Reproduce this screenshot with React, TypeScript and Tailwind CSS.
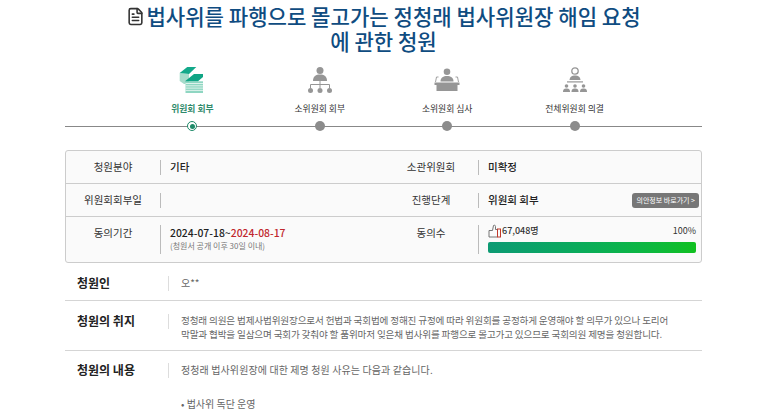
import React from 'react';
import { FileText } from 'lucide-react';

const PapersIcon = () => (
  <svg width="26" height="28" viewBox="0 0 26 28">
    <path d="M0.700 7 L10 8 V18 H5 L0.700 15Z" fill="#a6dccb" />
    <path d="M0.700 7 L8.300 1 H17.300 L10 8Z" fill="#13a98a" />
    <path d="M6.500 15.300 H24 V27 H6.500Z" fill="#8fd6c2" />
    <path d="M6 15.300 L15 8 H24 V11 L19 15.300Z" fill="#10a585" />
    <path d="M6.500 17.500H24M6.500 19.800H24M6.500 22.100H24M6.500 24.400H24" stroke="#e6f6f1" strokeWidth="0.9" />
  </svg>
);

const OrgIcon = () => (
  <svg width="26" height="28" viewBox="0 0 26 28" fill="#969696">
    <circle cx="13" cy="4.500" r="3.500" />
    <path d="M6 15 C6 10 9 8.500 13 8.500 C17 8.500 20 10 20 15Z" />
    <path d="M3.500 22V18.500H22.500V22M13 15V22" fill="none" stroke="#969696" strokeWidth="1" />
    <circle cx="3.500" cy="24.500" r="2.500" />
    <circle cx="13" cy="24.500" r="2.500" />
    <circle cx="22.500" cy="24.500" r="2.500" />
  </svg>
);

const PodiumIcon = () => (
  <svg width="26" height="24" viewBox="0 0 26 24" fill="#969696">
    <circle cx="13" cy="3.800" r="3.300" />
    <path d="M6.500 13.500 C6.500 9.500 9.500 8 13 8 C16.500 8 19.500 9.500 19.500 13.500Z" />
    <path d="M1.500 14 L2.500 9 H4.500 M24.500 14 L23.500 9 H21.500" fill="none" stroke="#969696" strokeWidth="0.9" />
    <path d="M0.500 14.500H25.500V17H23.500V23H2.500V17H0.500Z" />
  </svg>
);

const AssemblyIcon = () => (
  <svg width="26" height="26" viewBox="0 0 26 26" fill="#969696">
    <circle cx="13" cy="4" r="3.200" fill="none" stroke="#969696" strokeWidth="1.300" />
    <path d="M7.500 13 C8 9.500 10 8.500 13 8.500 C16 8.500 18 9.500 18.500 13Z" />
    <path d="M5 14.300H21V15.500H5Z" />
    <circle cx="4.500" cy="19" r="1.800" />
    <path d="M1 25 C1 22 2.500 21.500 4.500 21.500 C6.500 21.500 8 22 8 25Z" />
    <circle cx="13" cy="19" r="1.800" />
    <path d="M9.500 25 C9.500 22 11 21.500 13 21.500 C15 21.500 16.500 22 16.500 25Z" />
    <circle cx="21.500" cy="19" r="1.800" />
    <path d="M18 25 C18 22 19.500 21.500 21.500 21.500 C23.500 21.500 25 22 25 25Z" />
  </svg>
);

const ThumbIcon = () => (
  <svg width="13" height="14" viewBox="0 0 13 14" fill="none" className="mr-[1px]">
    <path d="M1 6.500H4.500L5.500 1.500C6.500 0.800 7.500 1.300 7.500 2.500V5.500H9.500V13H1Z" stroke="#666" strokeWidth="0.9" />
    <rect x="9.500" y="5" width="3" height="8" stroke="#c0392b" strokeWidth="1" />
  </svg>
);

const steps = [
  { label: '위원회 회부', icon: <PapersIcon />, active: true },
  { label: '소위원회 회부', icon: <OrgIcon /> },
  { label: '소위원회 심사', icon: <PodiumIcon /> },
  { label: '전체위원회 의결', icon: <AssemblyIcon /> },
];

const Divider = () => <span className="w-px h-[15px] bg-[#bbbbbb] shrink-0" />;

const Label = ({ children }: { children: React.ReactNode }) => (
  <div className="w-[95px] shrink-0 flex items-center">
    <span className="flex-1 text-center text-[10.5px] text-[#333]">{children}</span>
    <Divider />
  </div>
);

const DetailRow = ({ label, children }: { label: string; children: React.ReactNode }) => (
  <div className="flex px-3">
    <div className="w-[91px] shrink-0 text-[12px] font-bold leading-[18px] text-[#222]">{label}</div>
    <span className="mt-[2px] h-[15px] w-px shrink-0 bg-[#dddddd]" />
    <div className="pl-3 pt-[2px] text-[10px] leading-[13.5px] text-[#666] whitespace-nowrap">{children}</div>
  </div>
);

export default function App() {
  return (
    <div
      className="h-[414px] w-[760px] overflow-hidden bg-white"
      style={{ fontFamily: '"Noto Sans CJK KR", "Noto Sans", sans-serif' }}
    >
      <div className="ml-[65px] w-[637px]">
        <h1 className="flex flex-col items-center pt-[4px] text-[21.1px] font-medium leading-[25px] text-[#0f4c81]">
          <span className="flex items-center whitespace-nowrap">
            <FileText size={19} strokeWidth={2} className="mr-[1px] text-[#333]" />
            법사위를 파행으로 몰고가는 정청래 법사위원장 해임 요청
          </span>
          <span>에 관한 청원</span>
        </h1>

        <div className="relative mt-[12px] h-[70px]">
          <div className="absolute left-0 right-0 top-[60px] border-t border-[#888]" />
          <div className="flex justify-center">
            {steps.map((s) => (
              <div key={s.label} className="flex h-[70px] w-[127.4px] flex-col items-center">
                <div className="flex h-[28px] items-center">{s.icon}</div>
                <div
                  className={`mt-[9px] text-[8.8px] leading-[12px] ${s.active ? 'font-bold text-[#2f8a6b]' : 'text-[#333]'}`}
                >
                  {s.label}
                </div>
                {s.active ? (
                  <div className="relative mt-[6px] flex h-[10px] w-[10px] items-center justify-center rounded-full border border-[#1d8a68] bg-white">
                    <div className="h-[5px] w-[5px] rounded-full bg-[#1d8a68]" />
                  </div>
                ) : (
                  <div className="relative mt-[6px] h-[10px] w-[10px] rounded-full bg-[#8c8c8c]" />
                )}
              </div>
            ))}
          </div>
        </div>

        <div className="mt-[14px] rounded-[3px] border border-[#cccccc] bg-[#fafafa]">
          <div className="flex h-[33px] items-center border-b border-[#cccccc]">
            <Label>청원분야</Label>
            <div className="w-[223px] pl-[9px] text-[10.5px] font-medium text-[#222]">기타</div>
            <Label>소관위원회</Label>
            <div className="pl-[9px] text-[10.5px] font-medium text-[#222]">미확정</div>
          </div>
          <div className="flex h-[33px] items-center border-b border-[#cccccc]">
            <Label>위원회회부일</Label>
            <div className="w-[223px]" />
            <Label>진행단계</Label>
            <div className="flex flex-1 items-center justify-between pl-[9px] pr-[2px]">
              <span className="text-[10.5px] font-medium text-[#222]">위원회 회부</span>
              <span className="flex h-[15px] items-center rounded-[3px] bg-[#777] px-[4px] text-[7px] text-white">
                의안정보 바로가기 &gt;
              </span>
            </div>
          </div>
          <div className="flex h-[45px]">
            <div className="flex w-[95px] shrink-0 items-center">
              <span className="flex-1 pb-[14px] text-center text-[10.5px] text-[#333]">동의기간</span>
              <span className="h-[29px] w-px bg-[#bbbbbb]" />
            </div>
            <div className="w-[223px] pl-[9px] pt-[8px]">
              <div className="text-[10.4px] font-medium leading-[15px] text-[#222]">
                2024-07-18~<span className="text-[#c0272d]">2024-08-17</span>
              </div>
              <div className="text-[8px] leading-[12px] text-[#777]">(청원서 공개 이후 30일 이내)</div>
            </div>
            <div className="flex w-[95px] shrink-0 items-center">
              <span className="flex-1 pb-[14px] text-center text-[10.5px] text-[#333]">동의수</span>
              <span className="h-[29px] w-px bg-[#bbbbbb]" />
            </div>
            <div className="flex-1 pl-[9px] pr-[5px] pt-[6px]">
              <div className="flex h-[15px] items-center justify-between text-[9px] text-[#333]">
                <span className="flex items-center font-medium">
                  <ThumbIcon />
                  67,048명
                </span>
                <span>100%</span>
              </div>
              <div className="mt-[4px] h-[11px] rounded-[2px] bg-gradient-to-r from-[#0d9a73] to-[#10c01e]" />
            </div>
          </div>
        </div>

        <div className="mt-[11px] border-b border-[#d5d5d5] pb-[8px]">
          <DetailRow label="청원인">오**</DetailRow>
        </div>
        <div className="border-b border-[#d5d5d5] pb-[9px] pt-[11px]">
          <DetailRow label="청원의 취지">
            <p className="text-[9.6px] tracking-[-0.16px]">
              정청래 의원은 법제사법위원장으로서 헌법과 국회법에 정해진 규정에 따라 위원회를 공정하게 운영해야 할 의무가 있으나 도리어
            </p>
            <p className="text-[9.6px] tracking-[-0.16px]">
              막말과 협박을 일삼으며 국회가 갖춰야 할 품위마저 잊은채 법사위를 파행으로 몰고가고 있으므로 국회의원 제명을 청원합니다.
            </p>
          </DetailRow>
        </div>
        <div className="pt-[10px]">
          <DetailRow label="청원의 내용">
            <p className="tracking-[0.1px]">정청래 법사위원장에 대한 제명 청원 사유는 다음과 같습니다.</p>
            <p className="mt-[20px]">• 법사위 독단 운영</p>
          </DetailRow>
        </div>
      </div>
    </div>
  );
}
